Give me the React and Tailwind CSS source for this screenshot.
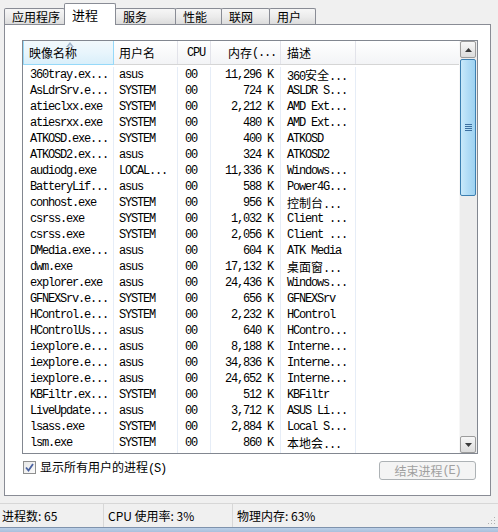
import React from "react";

const rows = [
  ["360tray.ex...", "asus", "00", "11,296 K", "360安全..."],
  ["AsLdrSrv.e...", "SYSTEM", "00", "724 K", "ASLDR S..."],
  ["atieclxx.exe", "SYSTEM", "00", "2,212 K", "AMD Ext..."],
  ["atiesrxx.exe", "SYSTEM", "00", "480 K", "AMD Ext..."],
  ["ATKOSD.exe...", "SYSTEM", "00", "400 K", "ATKOSD"],
  ["ATKOSD2.ex...", "asus", "00", "324 K", "ATKOSD2"],
  ["audiodg.exe", "LOCAL...", "00", "11,336 K", "Windows..."],
  ["BatteryLif...", "asus", "00", "588 K", "Power4G..."],
  ["conhost.exe", "SYSTEM", "00", "956 K", "控制台..."],
  ["csrss.exe", "SYSTEM", "00", "1,032 K", "Client ..."],
  ["csrss.exe", "SYSTEM", "00", "2,056 K", "Client ..."],
  ["DMedia.exe...", "asus", "00", "604 K", "ATK Media"],
  ["dwm.exe", "asus", "00", "17,132 K", "桌面窗..."],
  ["explorer.exe", "asus", "00", "24,436 K", "Windows..."],
  ["GFNEXSrv.e...", "SYSTEM", "00", "656 K", "GFNEXSrv"],
  ["HControl.e...", "SYSTEM", "00", "2,232 K", "HControl"],
  ["HControlUs...", "asus", "00", "640 K", "HContro..."],
  ["iexplore.e...", "asus", "00", "8,188 K", "Interne..."],
  ["iexplore.e...", "asus", "00", "34,836 K", "Interne..."],
  ["iexplore.e...", "asus", "00", "24,652 K", "Interne..."],
  ["KBFiltr.ex...", "SYSTEM", "00", "512 K", "KBFiltr"],
  ["LiveUpdate...", "asus", "00", "3,712 K", "ASUS Li..."],
  ["lsass.exe", "SYSTEM", "00", "2,884 K", "Local S..."],
  ["lsm.exe", "SYSTEM", "00", "860 K", "本地会..."],
];

function Mixed({ text }) {
  const parts = text.split(/([\u4e00-\u9fff]+)/);
  return (
    <>
      {parts.map((p, i) =>
        /[\u4e00-\u9fff]/.test(p) ? (
          <span key={i} className="text-[12px] tracking-normal font-['Noto_Sans_CJK_SC',sans-serif]">
            {p}
          </span>
        ) : (
          <span key={i}>{p}</span>
        )
      )}
    </>
  );
}

function Tab({ label, w, selected }) {
  if (selected) {
    return (
      <div
        className={`${w} h-[22px] relative z-10 -mb-px bg-white border border-b-0 border-[#898c95] rounded-t-[2px] pl-[7px] pt-[2px] text-[13px] leading-[18px] text-black`}
      >
        {label}
      </div>
    );
  }
  return (
    <div
      className={`${w} h-[16px] bg-gradient-to-b from-[#f6f6f6] via-[#ececec] to-[#dcdcdc] border border-b-0 border-[#898c95] rounded-t-[2px] pl-[7px] text-[12px] leading-[15px] text-black -ml-px first:ml-0`}
    >
      {label}
    </div>
  );
}

const colW = ["w-[91px]", "w-[64px]", "w-[33px]", "w-[70px]", "w-[75px]"];

function UpArrow() {
  return (
    <svg width="7" height="4" viewBox="0 0 7 4">
      <path d="M0 4 L3.5 0 L7 4 Z" fill="#3a3a3a" />
    </svg>
  );
}
function DownArrow() {
  return (
    <svg width="7" height="4" viewBox="0 0 7 4">
      <path d="M0 0 L3.5 4 L7 0 Z" fill="#3a3a3a" />
    </svg>
  );
}

export default function App() {
  const mono = "font-['Liberation_Mono',monospace] text-[12px] tracking-[-1.2px]";
  return (
    <div className="w-[498px] h-[532px] bg-[#f0f0f0] flex flex-col font-['Noto_Sans_CJK_SC',sans-serif] text-black overflow-hidden">
      {/* Tabs */}
      <div className="h-[24px] pl-[4px] pt-[3px] flex items-end">
        <Tab label="应用程序" w="w-[61px]" />
        <Tab label="进程" w="w-[52px] -ml-px" selected />
        <Tab label="服务" w="w-[61px]" />
        <Tab label="性能" w="w-[47px]" />
        <Tab label="联网" w="w-[49px]" />
        <Tab label="用户" w="w-[47px]" />
      </div>

      {/* Panel */}
      <div className="ml-[4px] w-[487px] h-[472px] bg-white border border-[#898c95] flex flex-col">
        <div className="ml-[17px] mt-[15px] w-[456px] h-[414px] border border-[#828790] flex bg-white">
          <div className="flex-1 flex flex-col min-w-0">
            {/* Header */}
            <div className="h-[24px] flex border-b border-[#d5d5d5] bg-gradient-to-b from-white to-[#f3f4f6] text-[12px] leading-[16px]">
              <div className={`${colW[0]} relative flex items-center pl-[5px] bg-gradient-to-b from-[#f2f9fc] via-[#e8f5fc] to-[#d9effa] border-l border-r border-b border-[#96d9f9] -mb-px`}>
                <svg className="absolute left-[42px] top-[1px]" width="8" height="5" viewBox="0 0 8 5">
                  <path d="M0 5 L4 0 L8 5 Z" fill="#a3b7cc" />
                  <path d="M2 5 L4 2.5 L6 5 Z" fill="#dde8f2" />
                </svg>
                映像名称
              </div>
              <div className={`${colW[1]} flex items-center pl-[5px] border-r border-[#e2e3ea]`}>用户名</div>
              <div className={`${colW[2]} flex items-center pl-[9px] border-r border-[#e2e3ea] ${mono}`}>CPU</div>
              <div className={`${colW[3]} flex items-center pl-[17px] border-r border-[#e2e3ea]`}>
                内存<span className={mono}>(...</span>
              </div>
              <div className={`${colW[4]} flex items-center pl-[6px] border-r border-[#e2e3ea]`}>描述</div>
              <div className="flex-1" />
            </div>
            {/* Rows */}
            <div className="flex-1 flex flex-col pt-[2px]">
              {rows.map((r, i) => (
                <div key={i} className={`h-[16px] flex items-center ${mono} leading-[16px]`}>
                  <div className={`${colW[0]} h-full pl-[7px] border-r border-[#e6edf7] whitespace-nowrap`}>{r[0]}</div>
                  <div className={`${colW[1]} h-full pl-[5px] border-r border-[#e6edf7] whitespace-nowrap`}>{r[1]}</div>
                  <div className={`${colW[2]} h-full pl-[7px] border-r border-[#e6edf7]`}>{r[2]}</div>
                  <div className={`${colW[3]} h-full pr-[7px] text-right border-r border-[#e6edf7] whitespace-nowrap`}>{r[3]}</div>
                  <div className={`${colW[4]} h-full pl-[6px] border-r border-[#e6edf7] whitespace-nowrap`}>
                    <Mixed text={r[4]} />
                  </div>
                </div>
              ))}
              <div className="flex-1 flex">
                {colW.map((w, i) => (
                  <div key={i} className={`${w} border-r border-[#e6edf7]`} />
                ))}
              </div>
            </div>
          </div>
          {/* Scrollbar */}
          <div className="w-[18px] flex flex-col bg-[#ededed] border-l border-[#f7f7f7] pr-[1px]">
            <div className="h-[17px] border border-[#9c9c9c] rounded-[2px] bg-gradient-to-b from-[#f7f7f7] to-[#dcdcdc] flex items-center justify-center">
              <UpArrow />
            </div>
            <div className="h-[137px] mt-[1px] border border-[#3c7fb1] rounded-[2px] bg-gradient-to-r from-[#c9e9fa] via-[#b1dcf6] to-[#9ed2f1] flex flex-col items-center justify-center gap-[1px]">
              <div className="w-[7px] h-[1px] bg-[#3c6fa0]" />
              <div className="w-[7px] h-[1px] bg-[#3c6fa0]" />
              <div className="w-[7px] h-[1px] bg-[#3c6fa0]" />
              <div className="w-[7px] h-[1px] bg-[#3c6fa0]" />
            </div>
            <div className="flex-1" />
            <div className="h-[17px] border border-[#9c9c9c] rounded-[2px] bg-gradient-to-b from-[#f7f7f7] to-[#dcdcdc] flex items-center justify-center">
              <DownArrow />
            </div>
          </div>
        </div>

        {/* Checkbox + button */}
        <div className="mt-[7px] flex items-start justify-between pl-[18px] pr-[14px]">
          <div className="flex items-center gap-[4px] h-[13px]">
            <div className="w-[13px] h-[13px] border border-[#8e8f8f] bg-gradient-to-br from-[#e8e8e8] to-[#fafafa] flex items-center justify-center">
              <svg width="9" height="9" viewBox="0 0 9 9">
                <path d="M1 4.5 L3.5 7.5 L8 1" fill="none" stroke="#4a62a0" strokeWidth="1.8" />
              </svg>
            </div>
            <span className="text-[12px] leading-[16px]">
              显示所有用户的进程<span className={mono}>(S)</span>
            </span>
          </div>
          <div className="w-[97px] h-[19px] border border-[#adb2b5] rounded-[3px] bg-[#f4f4f4] flex items-center justify-center text-[12px] leading-[16px] text-[#a0a0a0]">
            结束进程<span className={mono}>(E)</span>
          </div>
        </div>
      </div>

      {/* Status bar */}
      <div className="mt-[7px] h-[24px] border-t border-[#d7d7d7] flex text-[12px] leading-[16px] relative">
        <div className="w-[104px] pl-[2px] flex items-center border-r border-[#d7d7d7]">进程数: 65</div>
        <div className="w-[129px] pl-[4px] flex items-center border-r border-[#d7d7d7]">CPU 使用率: 3%</div>
        <div className="flex-1 pl-[4px] flex items-center">物理内存: 63%</div>
        <svg className="absolute right-[2px] bottom-[2px]" width="10" height="10" viewBox="0 0 10 10">
          <rect x="8" y="2" width="1" height="1" fill="#b0b0b0" />
          <rect x="5" y="5" width="1" height="1" fill="#b0b0b0" />
          <rect x="8" y="5" width="1" height="1" fill="#b0b0b0" />
          <rect x="2" y="8" width="1" height="1" fill="#b0b0b0" />
          <rect x="5" y="8" width="1" height="1" fill="#b0b0b0" />
          <rect x="8" y="8" width="1" height="1" fill="#b0b0b0" />
        </svg>
      </div>
      <div className="h-[5px] border-t border-[#7f93ad] bg-gradient-to-b from-[#bcd0e8] to-[#a9c0dc]" />
    </div>
  );
}
